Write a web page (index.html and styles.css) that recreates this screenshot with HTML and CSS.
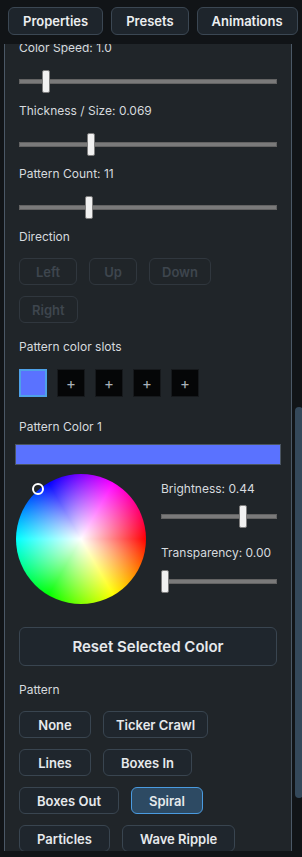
FILE: index.html
```html
<!DOCTYPE html>
<html lang="en">
<head>
  <meta charset="UTF-8">
  <meta name="viewport" content="width=device-width, initial-scale=1.0">
  <title>Pattern Editor</title>
  <link rel="stylesheet" href="styles.css">
</head>
<body>
  <div class="app">
    <nav class="tabs">
      <button class="tab">Properties</button>
      <button class="tab">Presets</button>
      <button class="tab">Animations</button>
    </nav>

    <div class="body">
      <div class="viewport" id="viewport">
        <div class="panel">
          <div class="field">
            <div class="field-label">Speed: 1.0</div>
            <input class="slider" type="range" min="0.1" max="10" step="0.1" value="1">
          </div>
          <div class="field">
            <div class="field-label">Scale: 1.00</div>
            <input class="slider" type="range" min="0.1" max="4" step="0.01" value="1">
          </div>

          <div class="field" id="colorSpeed">
            <div class="field-label">Color Speed: 1.0</div>
            <input class="slider" type="range" min="0.1" max="10" step="0.1" value="1">
          </div>
          <div class="field">
            <div class="field-label">Thickness / Size: 0.069</div>
            <input class="slider" type="range" min="0.001" max="0.25" step="0.001" value="0.069">
          </div>
          <div class="field">
            <div class="field-label">Pattern Count: 11</div>
            <input class="slider" type="range" min="1" max="39" step="1" value="11">
          </div>

          <div class="field field-direction">
            <div class="field-label">Direction</div>
            <div class="btn-group">
              <button class="btn btn-wide" disabled>Left</button>
              <button class="btn" disabled>Up</button>
              <button class="btn" disabled>Down</button>
              <button class="btn btn-wide" disabled>Right</button>
            </div>
          </div>

          <div class="field field-slots">
            <div class="field-label">Pattern color slots</div>
            <div class="slots">
              <button class="slot slot-selected"></button>
              <button class="slot">+</button>
              <button class="slot">+</button>
              <button class="slot">+</button>
              <button class="slot">+</button>
            </div>
          </div>

          <div class="field field-color">
            <div class="field-label">Pattern Color 1</div>
            <div class="color-bar"></div>
          </div>

          <div class="picker">
            <div class="wheel">
              <span class="wheel-marker"></span>
            </div>
            <div class="picker-side">
              <div class="field-label">Brightness: 0.44</div>
              <input class="slider slider-brightness" type="range" min="0" max="0.61" step="0.01" value="0.44">
              <div class="field-label label-transparency">Transparency: 0.00</div>
              <input class="slider slider-transparency" type="range" min="0" max="1" step="0.01" value="0">
            </div>
          </div>

          <button class="reset-btn">Reset Selected Color</button>

          <div class="field field-pattern">
            <div class="field-label">Pattern</div>
            <div class="btn-group">
              <button class="btn">None</button>
              <button class="btn btn-ticker">Ticker Crawl</button>
              <button class="btn">Lines</button>
              <button class="btn">Boxes In</button>
              <button class="btn">Boxes Out</button>
              <button class="btn active">Spiral</button>
              <button class="btn">Particles</button>
              <button class="btn">Wave Ripple</button>
            </div>
          </div>

          <div class="field">
            <div class="field-label">Pattern Speed: 1.0</div>
            <input class="slider" type="range" min="0.1" max="10" step="0.1" value="1">
          </div>
        </div>
      </div>

      <div class="scrollbar">
        <div class="scroll-thumb" style="margin-top: 363px; height: 391px;"></div>
      </div>
    </div>
  </div>

  <script>
    // keep the panel scrolled to the colour section
    const view = document.getElementById("viewport");
    const first = document.getElementById("colorSpeed");
    view.scrollTop = first.getBoundingClientRect().top - view.getBoundingClientRect().top + 4;
  </script>
</body>
</html>
```

FILE: styles.css
```css
* {
  box-sizing: border-box;
}

body {
  margin: 0;
  background-color: #111417;
  font-family: 'Inter', 'Noto Sans', sans-serif;
  color: #d6dade;
}

.app {
  display: flex;
  flex-direction: column;
  height: 100vh;
  padding-bottom: 6px;
}

.tabs {
  display: flex;
  gap: 8px;
  padding: 7px 4px 9px 8px;
}

.tab {
  height: 28px;
  padding: 0 14px;
  background-color: #1e252c;
  border: 1px solid #3b4753;
  border-radius: 6px;
  color: #eceef0;
  font-family: inherit;
  font-size: 13px;
  font-weight: 600;
}

.body {
  flex: 1;
  display: flex;
  min-height: 0;
}

.viewport {
  flex: 1;
  overflow: hidden;
}

.panel {
  margin-left: 4px;
  width: 288px;
  padding: 14px 14px 20px;
  background-color: #202529;
  border: 1px solid #4b5866;
  border-radius: 6px;
}

.scrollbar {
  width: 10px;
}

.scroll-thumb {
  width: 8px;
  margin-left: 3px;
  background-color: #34485a;
  border-radius: 4px;
}

.field + .field {
  margin-top: 10px;
}

.field-label {
  font-size: 12px;
  line-height: 16px;
  color: #d6dade;
}

.slider {
  -webkit-appearance: none;
  appearance: none;
  display: block;
  width: 100%;
  height: 24px;
  margin: 13px 0 0;
  background: transparent;
}

.slider::-webkit-slider-runnable-track {
  height: 5px;
  background-color: #7a7a7a;
  box-shadow: inset 0 0 0 1px #636363;
}

.slider::-webkit-slider-thumb {
  -webkit-appearance: none;
  width: 8px;
  height: 23px;
  margin-top: -9px;
  background-color: #f1f1f1;
  border: 1px solid #7d7d7d;
  border-radius: 2px;
}

.btn-group {
  display: flex;
  flex-wrap: wrap;
  gap: 11px 12px;
  margin-top: 13px;
}

.btn {
  height: 27px;
  padding: 0 15px;
  background-color: #1f262d;
  border: 1px solid #394550;
  border-radius: 6px;
  color: #e6e9ec;
  font-family: inherit;
  font-size: 13px;
  font-weight: 600;
}

.field-direction .btn {
  min-width: 48px;
  padding: 0 12px;
}

.field-direction .btn-wide {
  min-width: 58px;
}

.btn:disabled {
  background-color: #202529;
  border-color: #30373e;
  color: #3e464e;
}

.btn.active {
  background-color: #2d4a63;
  border-color: #4a9be0;
}

.field-pattern .btn {
  min-width: 72px;
  padding: 0 17px;
}

.field-pattern .btn-ticker {
  padding: 0 12px;
}

.field-slots {
  margin-top: 16px !important;
}

.slots {
  display: flex;
  gap: 10px;
  margin-top: 14px;
}

.slot {
  width: 28px;
  height: 28px;
  padding: 0;
  background-color: #050607;
  border: 1px solid #16191c;
  color: #a9b1b9;
  font-family: inherit;
  font-size: 15px;
  font-weight: 400;
}

.slot-selected {
  background-color: #5a72ff;
  border: 2px solid #4ea1e8;
}

.field-color {
  margin-top: 22px !important;
}

.color-bar {
  height: 21px;
  margin: 9px -4px 0;
  background-color: #5a72ff;
  border: 1px solid #4a5562;
}

.picker {
  display: flex;
  gap: 15px;
  margin-top: 9px;
}

.wheel {
  position: relative;
  flex: none;
  width: 130px;
  height: 130px;
  margin-left: -3px;
  border-radius: 50%;
  background:
    radial-gradient(closest-side, #ffffff, rgba(255, 255, 255, 0)),
    conic-gradient(from 90deg, #ff0000, #ffff00, #00ff00, #00ffff, #0000ff, #ff00ff, #ff0000);
}

.wheel-marker {
  position: absolute;
  left: 16px;
  top: 9px;
  width: 12px;
  height: 12px;
  border: 2px solid #ffffff;
  border-radius: 50%;
}

.picker-side {
  flex: 1;
  padding-top: 7px;
}

.slider-brightness {
  margin-top: 7px;
}

.label-transparency {
  margin-top: 17px;
}

.slider-transparency {
  margin-top: 8px;
}

.reset-btn {
  display: block;
  width: 100%;
  height: 39px;
  margin-top: 23px;
  background-color: #1f262d;
  border: 1px solid #394550;
  border-radius: 6px;
  color: #e6e9ec;
  font-family: inherit;
  font-size: 15px;
  font-weight: 600;
}

.field-pattern {
  margin-top: 16px;
}
```
